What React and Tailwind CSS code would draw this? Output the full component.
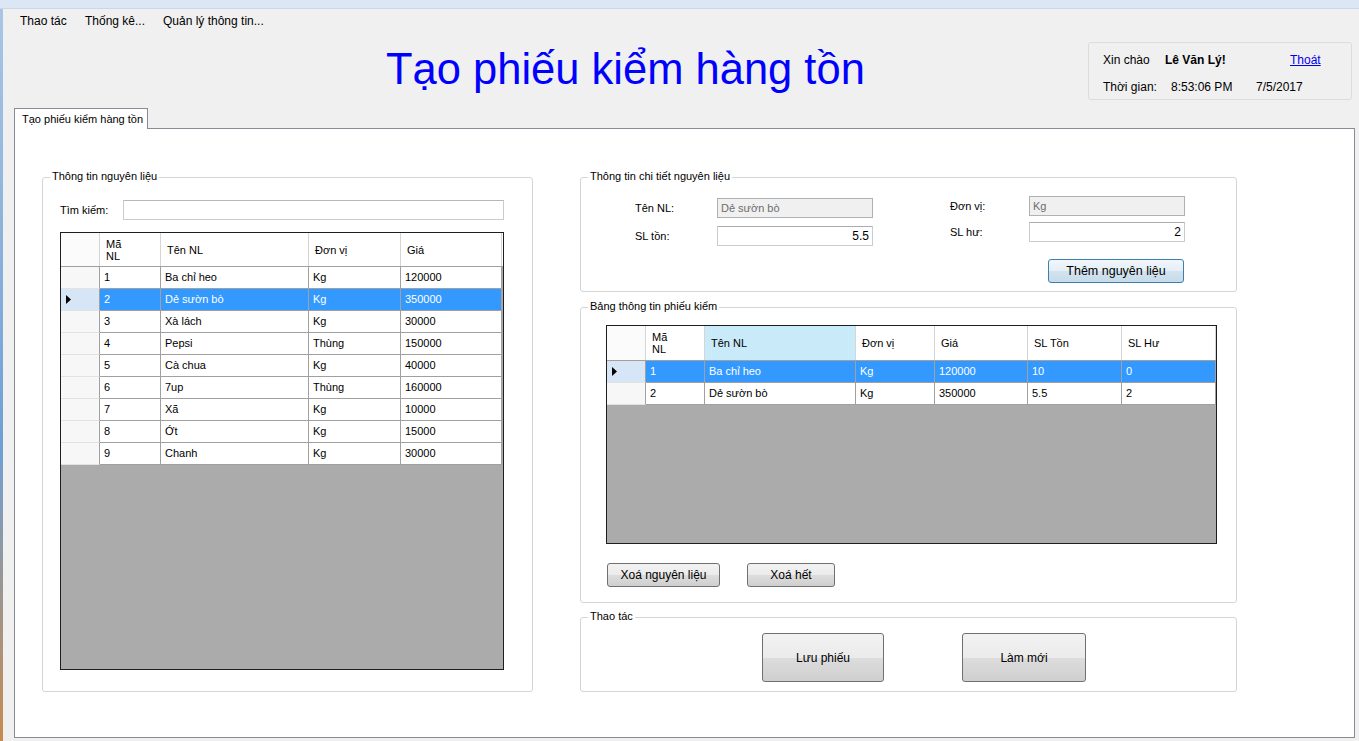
import React from "react";

const btn =
  "flex items-center justify-center rounded-[3px] border border-[#707070] bg-[linear-gradient(#f2f2f2,#ebebeb_50%,#dddddd_50%,#cfcfcf)] text-[12px] text-black";

const leftCols = [
  { key: "ma", label: <>Mã<br />NL</>, w: "w-[61px]" },
  { key: "ten", label: "Tên NL", w: "w-[148px]" },
  { key: "dv", label: "Đơn vị", w: "w-[92px]" },
  { key: "gia", label: "Giá", w: "w-[101px]" },
];

const leftRows = [
  { ma: "1", ten: "Ba chỉ heo", dv: "Kg", gia: "120000" },
  { ma: "2", ten: "Dẻ sườn bò", dv: "Kg", gia: "350000" },
  { ma: "3", ten: "Xà lách", dv: "Kg", gia: "30000" },
  { ma: "4", ten: "Pepsi", dv: "Thùng", gia: "150000" },
  { ma: "5", ten: "Cà chua", dv: "Kg", gia: "40000" },
  { ma: "6", ten: "7up", dv: "Thùng", gia: "160000" },
  { ma: "7", ten: "Xã", dv: "Kg", gia: "10000" },
  { ma: "8", ten: "Ớt", dv: "Kg", gia: "15000" },
  { ma: "9", ten: "Chanh", dv: "Kg", gia: "30000" },
];

const rightCols = [
  { key: "ma", label: <>Mã<br />NL</>, w: "w-[59px]" },
  { key: "ten", label: "Tên NL", w: "w-[151px]" },
  { key: "dv", label: "Đơn vị", w: "w-[79px]" },
  { key: "gia", label: "Giá", w: "w-[93px]" },
  { key: "ton", label: "SL Tồn", w: "w-[94px]" },
  { key: "hu", label: "SL Hư", w: "w-[94px]" },
];

const rightRows = [
  { ma: "1", ten: "Ba chỉ heo", dv: "Kg", gia: "120000", ton: "10", hu: "0" },
  { ma: "2", ten: "Dẻ sườn bò", dv: "Kg", gia: "350000", ton: "5.5", hu: "2" },
];

function DataGrid({ cols, rows, selected, hotCol, headH = "h-[34px]", className = "" }) {
  return (
    <div className={`border border-[#1e1e1e] bg-[#ababab] overflow-hidden text-[11px] ${className}`}>
      <div className={`flex ${headH} bg-white border-b border-[#a0a0a0]`}>
        <div className="w-[39px] shrink-0 border-r border-[#d5d5d5] bg-[#fbfbfb]" />
        {cols.map((c) => (
          <div
            key={c.key}
            className={`${c.w} shrink-0 border-r border-[#d5d5d5] flex items-center pl-[6px] leading-[12px] ${hotCol === c.key ? "bg-[#c9eaf9]" : ""}`}
          >
            <span>{c.label}</span>
          </div>
        ))}
        <div className="flex-1" />
      </div>
      {rows.map((r, i) => {
        const sel = i === selected;
        return (
          <div key={i} className="flex h-[22px]">
            <div
              className={`w-[39px] shrink-0 border-r border-b border-r-[#a0a0a0] border-b-[#e2e2e2] flex items-center pl-[5px] ${sel ? "bg-[#d6e6f6]" : "bg-[#f7f7f7]"}`}
            >
              {sel && (
                <svg width="5" height="9" viewBox="0 0 5 9">
                  <polygon points="0,0 5,4.5 0,9" fill="#000" />
                </svg>
              )}
            </div>
            {cols.map((c) => (
              <div
                key={c.key}
                className={`${c.w} shrink-0 border-r border-b border-[#a0a0a0] flex items-center pl-[4px] ${sel ? "bg-[#3399ff] text-white" : "bg-white"}`}
              >
                {r[c.key]}
              </div>
            ))}
          </div>
        );
      })}
    </div>
  );
}

function Group({ title, className = "", children }) {
  return (
    <div className={`relative border border-[#d5d5d5] rounded-[3px] bg-white ${className}`}>
      <span className="absolute -top-[9px] left-[7px] bg-white px-[2px] text-[11px] leading-[14px]">
        {title}
      </span>
      {children}
    </div>
  );
}

function Field({ label, value, labelW, disabled, right }) {
  return (
    <div className="flex items-center h-[20px]">
      <span className={`${labelW} text-[11px]`}>{label}</span>
      <div
        className={`w-[156px] h-[20px] border flex items-center px-[3px] text-[11px] ${
          disabled
            ? "bg-[#f0f0f0] border-[#adb2b5] text-[#6d6d6d]"
            : "bg-white border-[#c9ccd2] border-t-[#abadb3] text-black"
        } ${right ? "justify-end text-[12px]" : ""}`}
      >
        {value}
      </div>
    </div>
  );
}

export default function App() {
  return (
    <div className="w-[1359px] h-[741px] overflow-hidden flex flex-col bg-[#f0f0f0] text-black font-['Liberation_Sans',Arial,sans-serif]">
      <div className="h-[9px] shrink-0 bg-[#dbe7f4] border-b border-[#c9d7e6]" />
      <div className="flex flex-1">
        <div className="w-[3px] shrink-0 bg-[linear-gradient(#a9c6e6,#6f9fd3_60%,#c98a4e)]" />
        <div className="flex-1 flex flex-col">
          {/* menu */}
          <div className="h-[24px] flex items-center pl-[17px] text-[12px]">
            <span className="w-[65px]">Thao tác</span>
            <span className="w-[78px]">Thống kê...</span>
            <span>Quản lý thông tin...</span>
          </div>

          {/* header */}
          <div className="h-[75px] flex items-start">
            <div className="ml-[383px] mt-[12px] text-[43.5px] leading-[48px] text-[#0000ff] whitespace-nowrap">
              Tạo phiếu kiểm hàng tồn
            </div>
            <div className="ml-auto mr-[7px] mt-[9px] w-[264px] h-[58px] border border-[#dcdcdc] rounded-[3px] pl-[14px] pt-[9px] text-[12px]">
              <div className="flex items-center h-[16px]">
                <span className="w-[62px]">Xin chào</span>
                <span className="w-[125px] font-bold">Lê Văn Lý!</span>
                <span className="text-[#0000ee] underline">Thoát</span>
              </div>
              <div className="flex items-center h-[16px] mt-[11px]">
                <span className="w-[68px]">Thời gian:</span>
                <span className="w-[85px]">8:53:06 PM</span>
                <span>7/5/2017</span>
              </div>
            </div>
          </div>

          {/* tabs */}
          <div className="ml-[11px] flex">
            <div className="relative z-10 -mb-px w-[134px] h-[21px] bg-white border border-b-0 border-[#898c95] flex items-center pl-[7px] text-[11px]">
              Tạo phiếu kiểm hàng tồn
            </div>
          </div>
          <div className="ml-[11px] w-[1341px] h-[610px] bg-white border border-[#898c95] flex items-start pl-[27px] pt-[48px]">
            {/* left group */}
            <Group title="Thông tin nguyên liệu" className="w-[491px] h-[515px] shrink-0">
              <div className="flex items-center pl-[17px] pt-[22px]">
                <span className="w-[63px] text-[11px]">Tìm kiếm:</span>
                <div className="w-[381px] h-[20px] border border-[#c9ccd2] border-t-[#b5b8bf] bg-white" />
              </div>
              <DataGrid
                cols={leftCols}
                rows={leftRows}
                selected={1}
                headH="h-[34px]"
                className="ml-[17px] mt-[12px] w-[444px] h-[438px]"
              />
            </Group>

            {/* right column */}
            <div className="ml-[47px] w-[657px] flex flex-col">
              <Group title="Thông tin chi tiết nguyên liệu" className="h-[115px]">
                <div className="flex items-start">
                  <div className="ml-[54px] pt-[20px] flex flex-col gap-[8px]">
                    <Field label="Tên NL:" value="Dẻ sườn bò" labelW="w-[82px]" disabled />
                    <Field label="SL tồn:" value="5.5" labelW="w-[82px]" right />
                  </div>
                  <div className="ml-[77px] pt-[18px] flex flex-col gap-[6px]">
                    <Field label="Đơn vị:" value="Kg" labelW="w-[79px]" disabled />
                    <Field label="SL hư:" value="2" labelW="w-[79px]" right />
                  </div>
                </div>
                <div className="flex justify-end pr-[52px] mt-[13px]">
                  <div className="w-[136px] h-[24px] flex items-center justify-center rounded-[3px] border border-[#3c7fb1] bg-[linear-gradient(#f1f6fa,#e4eef6_50%,#d3e3ef_50%,#c6dbea)] text-[12.5px]">
                    Thêm nguyên liệu
                  </div>
                </div>
              </Group>

              <Group title="Bảng thông tin phiếu kiểm" className="h-[296px] mt-[15px]">
                <DataGrid
                  cols={rightCols}
                  rows={rightRows}
                  selected={0}
                  hotCol="ten"
                  headH="h-[35px]"
                  className="ml-[25px] mt-[17px] w-[611px] h-[219px]"
                />
                <div className="flex gap-[27px] ml-[26px] mt-[19px]">
                  <div className={`${btn} w-[113px] h-[24px]`}>Xoá nguyên liệu</div>
                  <div className={`${btn} w-[88px] h-[24px]`}>Xoá hết</div>
                </div>
              </Group>

              <Group title="Thao tác" className="h-[75px] mt-[14px]">
                <div className="flex gap-[78px] ml-[181px] mt-[15px]">
                  <div className={`${btn} w-[122px] h-[49px]`}>Lưu phiếu</div>
                  <div className={`${btn} w-[124px] h-[49px]`}>Làm mới</div>
                </div>
              </Group>
            </div>
          </div>
        </div>
      </div>
    </div>
  );
}
